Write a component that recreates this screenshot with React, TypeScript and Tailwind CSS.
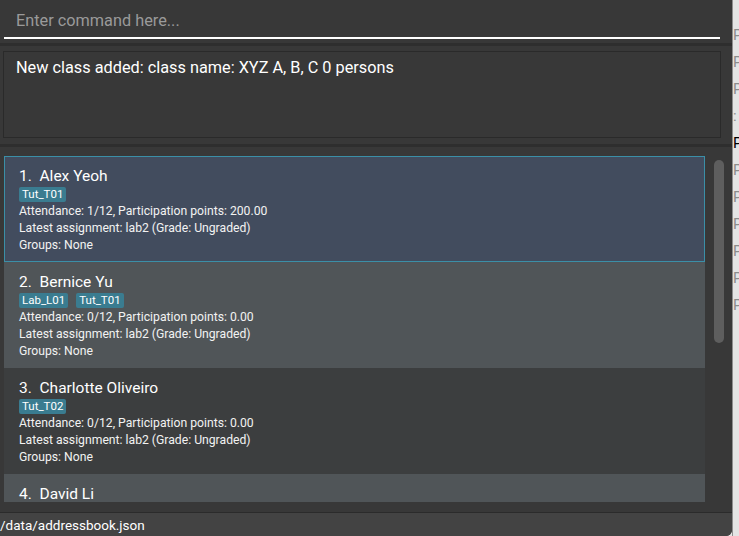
import React from 'react';

type Person = {
  name: string;
  tags: string[];
  attendance: string;
  points: string;
};

const persons: Person[] = [
  { name: 'Alex Yeoh', tags: ['Tut_T01'], attendance: '1/12', points: '200.00' },
  { name: 'Bernice Yu', tags: ['Lab_L01', 'Tut_T01'], attendance: '0/12', points: '0.00' },
  { name: 'Charlotte Oliveiro', tags: ['Tut_T02'], attendance: '0/12', points: '0.00' },
  { name: 'David Li', tags: [], attendance: '0/12', points: '0.00' },
];

const cardBg = ['bg-[#424c5e]', 'bg-[#505558]', 'bg-[#3c3e3f]', 'bg-[#505558]'];

const PersonCard: React.FC<{ person: Person; index: number }> = ({ person, index }) => {
  const selected = index === 0;
  return (
    <div
      className={`${cardBg[index]} ${selected ? 'border border-[#3b8fa7]' : 'border border-transparent'} h-[106px] shrink-0 pl-[14px] pt-[9px]`}
    >
      <div className="text-[15.5px] leading-[20px] text-white">
        {index + 1}.&nbsp; {person.name}
      </div>
      <div className="flex gap-[8px] h-[15px] mt-[1px]">
        {person.tags.map((t) => (
          <span key={t} className="bg-[#3a7c90] text-white text-[11.5px] leading-[15px] px-[3px] rounded-[2px]">
            {t}
          </span>
        ))}
      </div>
      <div className="text-[12.2px] leading-[17px] text-[#f2f2f2] mt-[1px]">
        <div>
          Attendance: {person.attendance}, Participation points: {person.points}
        </div>
        <div>Latest assignment: lab2 (Grade: Ungraded)</div>
        <div>Groups: None</div>
      </div>
    </div>
  );
};

export default function App() {
  return (
    <div className="w-[739px] h-[536px] flex overflow-hidden bg-[#e4e4e4]" style={{ fontFamily: 'Roboto, "Noto Sans", sans-serif' }}>
      <div className="w-[732px] h-full flex flex-col bg-[#383838] rounded-br-[6px] shrink-0">
        {/* command box */}
        <div className="h-[43px] px-[4px] shrink-0">
          <div className="w-[716px] h-[39px] border-b-2 border-white flex items-center pl-[12px] pt-[6px]">
            <span className="text-[16.3px] text-[#9a9a9a]">Enter command here...</span>
          </div>
        </div>
        <div className="h-[3px] bg-[#2e2e2e] shrink-0" />
        {/* result display */}
        <div className="h-[98px] pt-[5px] pl-[3px] shrink-0">
          <div className="w-[718px] h-[87px] border border-[#2a2a2a] bg-[#383838] pl-[12px] pt-[4px]">
            <span className="text-[16.3px] text-white">New class added: class name: XYZ A, B, C 0 persons</span>
          </div>
        </div>
        <div className="h-[3px] bg-[#2e2e2e] shrink-0" />
        {/* person list */}
        <div className="flex-1 flex pt-[9px] pl-[4px] min-h-0">
          <div className="w-[701px] h-[346px] flex flex-col overflow-hidden">
            {persons.map((p, i) => (
              <PersonCard key={p.name} person={p} index={i} />
            ))}
          </div>
          <div className="w-[27px] h-[356px] -mt-[9px] pt-[13px] flex justify-center bg-[#383838]">
            <div className="w-[10px] h-[183px] rounded-full bg-[#5e5e5e]" />
          </div>
        </div>
        {/* status bar */}
        <div className="h-[24px] border-t border-[#2b2b2b] bg-[#434343] shrink-0 pt-[3px] rounded-br-[6px]">
          <div className="text-[13.5px] leading-[18px] text-white whitespace-nowrap">/data/addressbook.json</div>
        </div>
      </div>
      <div className="w-px h-full bg-[#8e8e8e] shrink-0" />
      <div className="flex-1 overflow-hidden text-[15px] leading-[27px] text-[#8c8c8c] pt-[22px]">
        {['P', 'P', 'P', ':', 'P', 'P', 'P', 'P', 'P', 'P', 'P'].map((c, i) => (
          <div key={i} className={i === 4 ? 'text-black' : ''}>
            {c}
          </div>
        ))}
      </div>
    </div>
  );
}
